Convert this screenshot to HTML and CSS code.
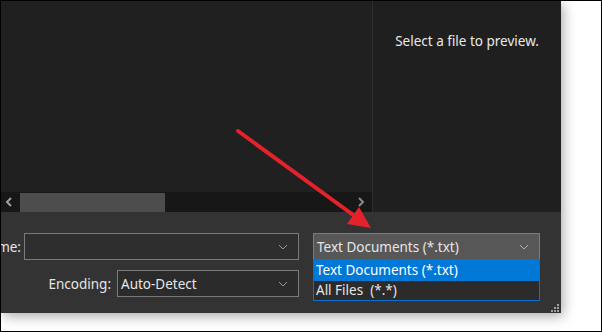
FILE: index.html
```html
<!DOCTYPE html>
<html lang="en">
<head>
    <meta charset="UTF-8">
    <meta name="viewport" content="width=device-width, initial-scale=1.0">
    <title>Open</title>
    <link rel="stylesheet" href="styles.css">
</head>
<body>

    <div class="frame">
        <div class="dialog">
            <div class="browse">
                <div class="files">
                    <div class="file-list"></div>
                    <div class="hscroll">
                        <svg class="arrow" width="19" height="20" viewBox="0 0 19 20"><path d="M10 6 L6 10 L10 14" fill="none" stroke="#a0a0a0" stroke-width="2"/></svg>
                        <div class="thumb"></div>
                        <svg class="arrow arrow-right" width="22" height="20" viewBox="0 0 22 20"><path d="M9 6 L13 10 L9 14" fill="none" stroke="#8a8a8a" stroke-width="2"/></svg>
                    </div>
                </div>
                <div class="preview">Select a file to preview.</div>
            </div>

            <div class="bottom">
                <!-- File name row -->
                <div class="row">
                    <div class="label label-name">File name:</div>
                    <div class="combo combo-name">
                        <span class="value"></span>
                        <svg class="chev" width="10" height="6" viewBox="0 0 10 6"><path d="M1 1 L5 5 L9 1" fill="none" stroke="#9a9a9a" stroke-width="1"/></svg>
                    </div>
                    <div class="combo combo-filter">
                        <span class="value">Text Documents (*.txt)</span>
                        <svg class="chev" width="10" height="6" viewBox="0 0 10 6"><path d="M1 1 L5 5 L9 1" fill="none" stroke="#b0b0b0" stroke-width="1"/></svg>
                        <ul class="dropdown">
                            <li class="selected">Text Documents (*.txt)</li>
                            <li>All Files&nbsp; (*.*)</li>
                        </ul>
                    </div>
                </div>

                <!-- Encoding row -->
                <div class="row row-encoding">
                    <div class="label label-enc">Encoding:</div>
                    <div class="combo combo-enc">
                        <span class="value">Auto-Detect</span>
                        <svg class="chev" width="10" height="6" viewBox="0 0 10 6"><path d="M1 1 L5 5 L9 1" fill="none" stroke="#9a9a9a" stroke-width="1"/></svg>
                    </div>
                </div>

                <div class="grip">
                    <i style="grid-area: 1 / 3"></i>
                    <i style="grid-area: 2 / 2"></i>
                    <i style="grid-area: 2 / 3"></i>
                    <i style="grid-area: 3 / 1"></i>
                    <i style="grid-area: 3 / 2"></i>
                    <i style="grid-area: 3 / 3"></i>
                </div>
            </div>
        </div>

        <!-- Annotation arrow -->
        <svg class="annotation" width="600" height="330" viewBox="0 0 600 330">
            <line x1="237" y1="130" x2="355" y2="216" stroke="#e5212b" stroke-width="4" stroke-linecap="round"/>
            <polygon points="370,227 346,223 358,206" fill="#e5212b"/>
        </svg>
    </div>

</body>
</html>
```

FILE: styles.css
```css
body {
    margin: 0;
    background: #fff;
    font-family: "Noto Sans", "Open Sans", sans-serif;
    font-size: 13.5px;
    color: #e6e6e6;
}

.frame {
    position: relative;
    width: 602px;
    height: 332px;
    box-sizing: border-box;
    border: 1px solid #000;
    overflow: hidden;
}

.dialog {
    width: 560px;
    height: 312px;
    background: #333;
    box-shadow: 2px 3px 12px rgba(0, 0, 0, 0.35);
    position: relative;
}

.browse {
    display: flex;
    height: 211px;
}

.files {
    width: 371px;
    display: flex;
    flex-direction: column;
    background: #202020;
    border-right: 1px solid #2e2e2e;
}

.file-list {
    flex: 1;
}

.hscroll {
    height: 20px;
    background: #171717;
    display: flex;
    align-items: center;
}

.arrow {
    display: block;
    flex: none;
}

.arrow-right {
    margin-left: auto;
}

.thumb {
    width: 145px;
    height: 19px;
    background: #4d4d4d;
}

.preview {
    flex: 1;
    background: #1f1f1f;
    text-align: center;
    padding-top: 31px;
    color: #e8e8e8;
}

.bottom {
    height: 101px;
    box-sizing: border-box;
    padding-top: 21px;
    position: relative;
}

.row {
    display: flex;
    align-items: center;
}

.row-encoding {
    margin-top: 10px;
}

.label {
    display: flex;
    justify-content: flex-end;
    white-space: nowrap;
    color: #e6e6e6;
}

.label-name {
    width: 20px;
    margin-right: 3px;
}

.label-enc {
    width: 110px;
    margin-right: 6px;
}

.combo {
    position: relative;
    height: 27px;
    box-sizing: border-box;
    border: 1px solid #7a7a7a;
    display: flex;
    align-items: center;
    padding: 0 10px 0 3px;
}

.combo .value {
    flex: 1;
    white-space: nowrap;
}

.combo-name {
    width: 275px;
    background: #2e2e2e;
}

.combo-filter {
    width: 227px;
    margin-left: 14px;
    background: #575757;
    border-color: #7c7c7c;
}

.combo-enc {
    width: 182px;
    background: #2b2b2b;
}

.dropdown {
    position: absolute;
    left: -1px;
    top: 25px;
    width: 227px;
    box-sizing: border-box;
    margin: 0;
    padding: 0;
    list-style: none;
    background: #2b2b2b;
    border: 1px solid #0a6fd0;
    z-index: 2;
}

.dropdown li {
    height: 19px;
    line-height: 19px;
    padding-left: 2px;
    white-space: nowrap;
}

.dropdown li.selected {
    background: #0078d7;
    color: #fff;
    height: 21px;
    line-height: 21px;
}

.grip {
    position: absolute;
    right: 2px;
    bottom: 1px;
    display: grid;
    grid-template-columns: repeat(3, 2px);
    grid-template-rows: repeat(3, 2px);
    gap: 1px;
}

.grip i {
    background: #a0a0a0;
}

.annotation {
    position: absolute;
    left: 0;
    top: 0;
    pointer-events: none;
}
```
